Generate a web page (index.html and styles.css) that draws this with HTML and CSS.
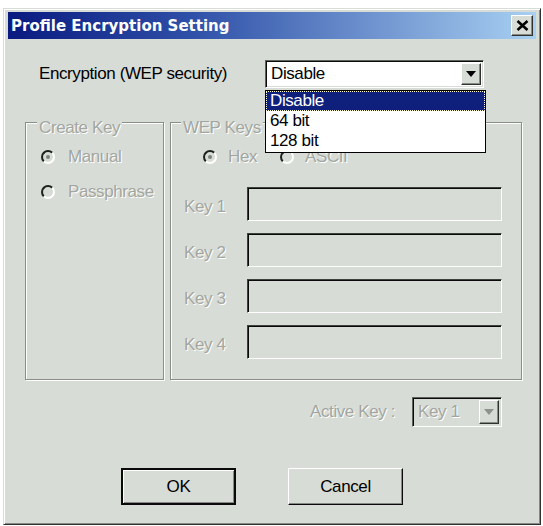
FILE: index.html
```html
<!DOCTYPE html>
<html lang="en">
<head>
    <meta charset="UTF-8">
    <title>Profile Encryption Setting</title>
    <link rel="stylesheet" href="styles.css">
</head>
<body>
    <div class="window">
        <div class="titlebar">
            <span class="title">Profile Encryption Setting</span>
            <span class="close">
                <svg width="13" height="11" viewBox="0 0 13 11">
                    <path d="M1.5 1 L11.5 10 M11.5 1 L1.5 10" stroke="#000" stroke-width="2.6" fill="none"/>
                </svg>
            </span>
        </div>

        <div class="content">
            <!-- encryption select -->
            <div class="enc-row">
                <span class="enc-label">Encryption (WEP security)</span>
                <div class="combo">
                    <span class="combo-text">Disable</span>
                    <span class="drop-btn"><i class="arrow"></i></span>
                    <ul class="drop-list">
                        <li class="selected">Disable</li>
                        <li>64 bit</li>
                        <li>128 bit</li>
                    </ul>
                </div>
            </div>

            <!-- group boxes -->
            <div class="groups">
                <div class="group create-key">
                    <div class="group-title">Create Key</div>
                    <div class="radio first checked"><span class="dot"></span>Manual</div>
                    <div class="radio second"><span class="dot"></span>Passphrase</div>
                </div>
                <div class="group wep-keys">
                    <div class="group-title">WEP Keys</div>
                    <div class="radio-row">
                        <div class="radio checked"><span class="dot"></span>Hex</div>
                        <div class="radio"><span class="dot"></span>ASCII</div>
                    </div>
                    <div class="key-rows">
                        <div class="key-row"><span class="key-label">Key 1</span><span class="key-input"></span></div>
                        <div class="key-row"><span class="key-label">Key 2</span><span class="key-input"></span></div>
                        <div class="key-row"><span class="key-label">Key 3</span><span class="key-input"></span></div>
                        <div class="key-row"><span class="key-label">Key 4</span><span class="key-input"></span></div>
                    </div>
                </div>
            </div>

            <div class="active-row">
                <span class="active-label">Active Key :</span>
                <div class="combo small disabled">
                    <span class="combo-text">Key 1</span>
                    <span class="drop-btn"><i class="arrow"></i></span>
                </div>
            </div>

            <div class="buttons">
                <button class="btn default">OK</button>
                <button class="btn">Cancel</button>
            </div>
        </div>
    </div>
</body>
</html>
```

FILE: styles.css
```css
* {
    margin: 0;
    padding: 0;
    box-sizing: border-box;
}
body {
    background-color: #fff;
    font-family: 'Liberation Sans', Arial, sans-serif;
    font-size: 17px;
    letter-spacing: -0.4px;
    color: #000;
}

/* window frame */
.window {
    margin: 8px 0 0 3px;
    width: 538px;
    height: 517px;
    padding: 3px 4px 0 4px;
    background-color: #d8dcd6;
    border: 1px solid;
    border-color: #d8dcd6 #303230 #303230 #d8dcd6;
    box-shadow: inset 1px 1px 0 #fff, inset -1px -1px 0 #868a85;
}
.titlebar {
    height: 27px;
    display: flex;
    justify-content: space-between;
    align-items: center;
    padding: 0 3px;
    background: linear-gradient(to right, #0a1a80 0%, #2f50a8 35%, #a8d0f2 100%);
}
.title {
    font-family: 'DejaVu Sans', Verdana, sans-serif;
    font-weight: bold;
    font-size: 15px;
    letter-spacing: 0;
    color: #fff;
}
.close {
    width: 22px;
    height: 21px;
    display: flex;
    justify-content: center;
    align-items: center;
    background-color: #d8dcd6;
    border: 1px solid;
    border-color: #fff #303230 #303230 #fff;
    box-shadow: inset -1px -1px 0 #868a85;
}

.content {
    position: relative;
}

/* encryption row */
.enc-row {
    display: flex;
    align-items: center;
    margin-top: 21px;
    padding-left: 31px;
}
.enc-label {
    width: 226px;
}
.combo {
    position: relative;
    width: 219px;
    height: 28px;
    display: flex;
    background-color: #fff;
    border: 1px solid;
    border-color: #5e625d #fff #fff #5e625d;
    box-shadow: inset 1px 1px 0 #0a0a0a, inset -1px -1px 0 #d8dcd6;
    padding: 2px;
}
.combo-text {
    flex: 1;
    padding-left: 3px;
    line-height: 22px;
}
.drop-btn {
    width: 20px;
    display: flex;
    justify-content: center;
    align-items: center;
    background-color: #d8dcd6;
    border: 1px solid;
    border-color: #fff #303230 #303230 #fff;
    box-shadow: inset -1px -1px 0 #868a85;
}
.arrow {
    width: 0;
    height: 0;
    border-left: 5px solid transparent;
    border-right: 5px solid transparent;
    border-top: 6px solid #000;
}
.drop-list {
    position: absolute;
    top: 29px;
    left: -1px;
    width: 221px;
    height: 63px;
    list-style: none;
    background-color: #fff;
    border: 1px solid #000;
    z-index: 10;
}
.drop-list li {
    height: 20px;
    line-height: 18px;
    padding-left: 3px;
    border: 1px solid transparent;
}
.drop-list li.selected {
    background-color: #0e1f7c;
    color: #fff;
    border: 1px dotted #fffbd0;
}

/* group boxes */
.groups {
    display: flex;
    gap: 6px;
    margin-top: 34px;
    padding-left: 17px;
}
.group {
    height: 258px;
    display: flex;
    flex-direction: column;
    align-items: flex-start;
    border: 1px solid #8a8e89;
    box-shadow: inset 1px 1px 0 #fff, 1px 1px 0 #fff;
    color: #a2a6a1;
    text-shadow: 1px 1px 0 #fff;
}
.create-key {
    width: 139px;
}
.wep-keys {
    width: 352px;
}
.group-title {
    margin-top: -5px;
    line-height: 20px;
    padding: 0 2px;
    background-color: #d8dcd6;
}
.create-key .group-title {
    margin-left: 11px;
}
.wep-keys .group-title {
    margin-left: 10px;
}

/* radio buttons */
.radio {
    display: flex;
    align-items: center;
    line-height: 20px;
}
.dot {
    position: relative;
    width: 14px;
    height: 14px;
    border-radius: 50%;
    border: 2px solid;
    border-color: #1e201e #fff #fff #1e201e;
    background-color: #d8dcd6;
}
.checked .dot::after {
    content: '';
    position: absolute;
    left: 3px;
    top: 3px;
    width: 4px;
    height: 4px;
    border-radius: 50%;
    background-color: #7e827d;
}
.create-key .radio {
    margin-left: 15px;
    gap: 13px;
}
.create-key .first {
    margin-top: 9px;
}
.create-key .second {
    margin-top: 15px;
}
.radio-row {
    display: flex;
    gap: 23px;
    margin-top: 9px;
    margin-left: 32px;
}
.radio-row .radio {
    gap: 11px;
}

/* key inputs */
.key-rows {
    display: flex;
    flex-direction: column;
    gap: 12px;
    margin-top: 20px;
    margin-left: 13px;
}
.key-row {
    display: flex;
    align-items: center;
}
.key-label {
    width: 63px;
    padding-top: 5px;
}
.key-input {
    width: 255px;
    height: 34px;
    border: 1px solid;
    border-color: #3e423d #fff #fff #3e423d;
    box-shadow: inset 1px 1px 0 #0a0a0a, inset -1px -1px 0 #d8dcd6;
}

/* active key */
.active-row {
    display: flex;
    justify-content: flex-end;
    align-items: center;
    gap: 17px;
    margin-top: 17px;
    padding-right: 34px;
}
.active-label {
    color: #a2a6a1;
    text-shadow: 1px 1px 0 #fff;
}
.combo.small {
    width: 90px;
    height: 30px;
}
.combo.disabled {
    background-color: #d8dcd6;
    color: #a2a6a1;
    text-shadow: 1px 1px 0 #fff;
}
.combo.disabled .combo-text {
    line-height: 24px;
}
.combo.disabled .arrow {
    border-top-color: #8e928d;
}

/* buttons */
.buttons {
    display: flex;
    gap: 52px;
    margin-top: 41px;
    padding-left: 113px;
}
.btn {
    width: 115px;
    height: 37px;
    font-family: 'Liberation Sans', Arial, sans-serif;
    font-size: 17px;
    letter-spacing: -0.4px;
    color: #000;
    background-color: #d8dcd6;
    border: 1px solid;
    border-color: #fff #0a0a0a #0a0a0a #fff;
    box-shadow: inset -1px -1px 0 #868a85;
}
.btn.default {
    border: 2px solid #0a0a0a;
    box-shadow: inset 1px 1px 0 #fff, inset -1px -1px 0 #868a85;
}
```
